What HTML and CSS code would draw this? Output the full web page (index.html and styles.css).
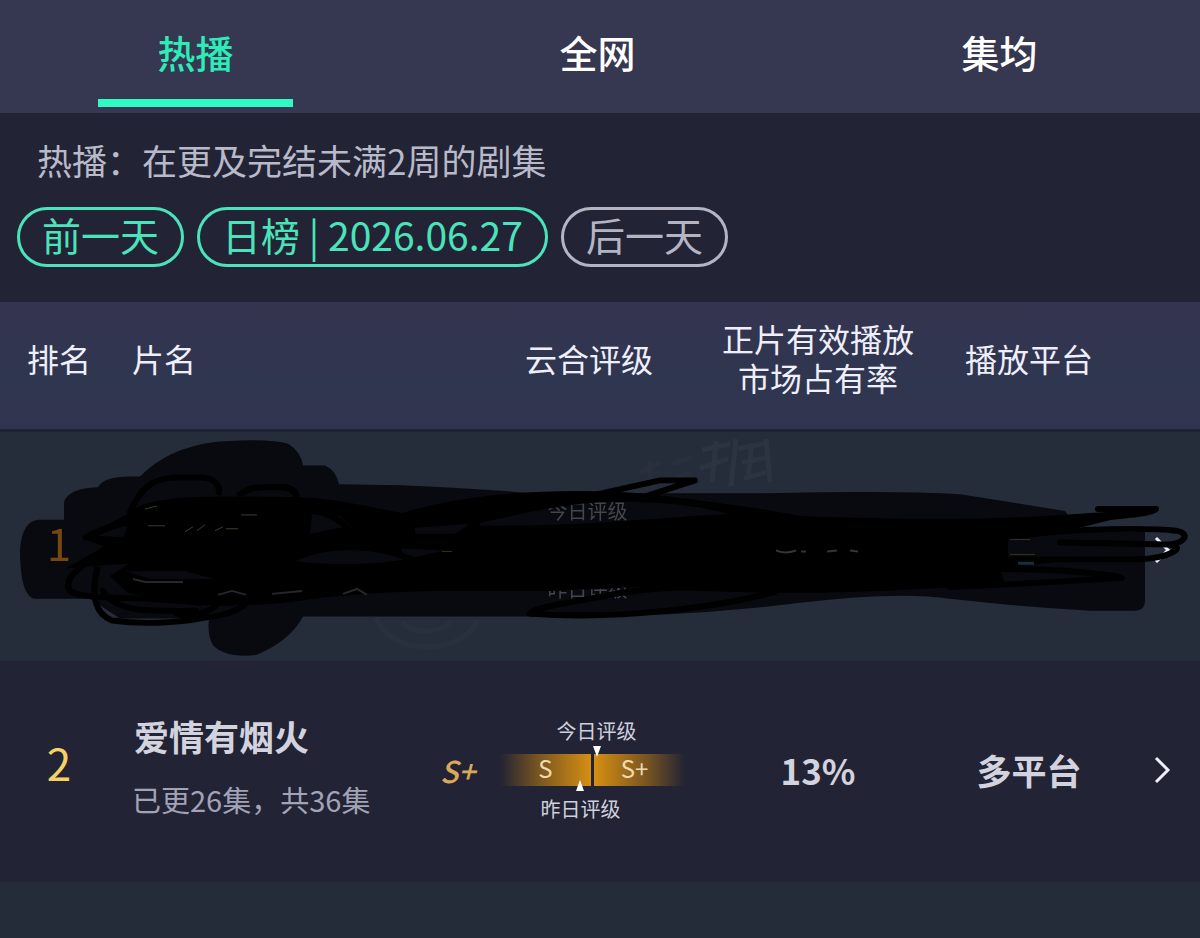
FILE: index.html
```html
<!DOCTYPE html>
<html lang="zh-CN">
<head>
  <meta charset="UTF-8">
  <meta name="viewport" content="width=device-width, initial-scale=1.0">
  <title>热播榜</title>
  <link rel="stylesheet" href="styles.css">
</head>
<body>
  <nav class="tabs">
    <button type="button" class="tab active">热播</button>
    <button type="button" class="tab">全网</button>
    <button type="button" class="tab">集均</button>
  </nav>

  <section class="filters">
    <p class="note">热播：在更及完结未满2周的剧集</p>
    <div class="days">
      <button type="button" class="pill">前一天</button>
      <button type="button" class="pill">日榜 | 2026.06.27</button>
      <button type="button" class="pill muted">后一天</button>
    </div>
  </section>

  <table class="ranking">
    <colgroup>
      <col class="col-rank">
      <col>
      <col class="col-grade">
      <col class="col-share">
      <col class="col-platform">
      <col class="col-more">
    </colgroup>
    <thead>
      <tr>
        <th>排名</th>
        <th class="name">片名</th>
        <th class="grade-head">云合评级</th>
        <th>正片有效播放<br>市场占有率</th>
        <th>播放平台</th>
        <th></th>
      </tr>
    </thead>
    <tbody>
      <!-- first place, scribbled out -->
      <tr class="row hidden-row">
        <td class="rank">1
          <svg class="shade" viewBox="0 430 1200 231" preserveAspectRatio="none" aria-hidden="true">
            <g fill="none" stroke="#3b4452" stroke-width="5" opacity="0.35">
              <path d="M702 447l28-6M716 438l-4 42M700 466l28-10M736 436l-5 48M738 446l30-6M766 436l4 44M742 460l24-5M744 476l22-6M752 440l-4 36"/>
              <path d="M640 470l20-10M650 458v22M672 462l20-8M676 476l16-6" opacity="0.5"/>
              <path d="M376 617C385 640 410 649 438 646C460 642 474 632 477 618M402 622C415 634 440 634 452 620" stroke-width="6" opacity="0.5"/>
            </g>
            <path fill="#030306" fill-opacity="0.82" d="M20 548Q22 520 38 518H64V500Q68 486 98 485Q103 474 130 474H140Q168 445 215 439Q270 435 288 441Q301 449 303 463H325Q336 468 339 482L400 483Q470 486 535 491H765Q900 488 960 492L1065 509L1080 530H1145V600Q1145 610 1135 610H1090Q1020 606 950 598Q900 590 800 602C720 612 650 616 560 616H303Q290 641 256 655Q225 658 213 645Q207 635 209 618H120L90 598H35Q20 596 20 548Z"/>
          </svg>
        </td>
        <td class="name"></td>
        <td class="grade-cell">
          <div class="grade">
            <span class="grade-now"></span>
            <div class="meter">
              <span>今日评级</span>
              <div class="bar"></div>
              <span>昨日评级</span>
            </div>
          </div>
        </td>
        <td></td>
        <td></td>
        <td class="more">
          <a href="#" aria-label="详情"><svg class="chevron" viewBox="0 0 18 28"><path d="M3 2l12 12L3 26"/></svg></a>
          <svg class="ink" viewBox="0 430 1200 231" preserveAspectRatio="none" aria-hidden="true">
            <path fill="#000" fill-rule="evenodd" d="M82 536L128 512C150 492 200 494 300 495C340 497 370 505 402 511C470 490 560 485 640 491C700 498 760 506 800 514C900 518 1000 518 1060 513L1154 507L1080 526L1008 538V560L1060 560L1000 567L1005 583C900 590 840 592 780 592L700 590L640 586L550 590H500C420 589 350 592 300 600C250 606 220 606 180 603L128 592L110 575L130 562L66 567L104 545ZM480 521C520 512 560 503 600 500C650 498 700 503 728 512C650 516 600 524 480 524ZM295 560C330 544 370 546 405 558C380 563 340 565 295 560ZM98 534L128 521L124 536ZM125 570H185L215 578L150 578ZM312 512L340 514L350 524L310 532ZM402 547L445 549L415 556L402 554ZM415 526L470 522L455 532L415 532Z"/>
            <g class="strokes">
              <path d="M130 510C140 488 150 476 175 475H202C215 476 219 483 219 490M240 492Q250 485 262 485H285Q298 487 297 500"/>
              <path d="M86 536C120 515 160 520 220 508M100 552C75 568 63 580 70 590C85 600 130 594 200 602M97 568C92 590 92 612 112 620C140 624 175 623 205 617C225 615 235 611 245 604M103 590C115 612 150 611 196 610M173 610C185 620 200 615 215 606"/>
              <path d="M298 508C320 505 345 520 352 532M380 545L420 562M580 496L660 478H695L640 496M530 613C535 606 570 602 600 596C630 589 660 587 690 586M530 613C620 620 720 606 775 591"/>
              <path d="M1098 507H1156C1150 514 1100 514 1040 522M1020 534C1080 526 1150 526 1176 529C1192 532 1184 542 1168 543L1060 541M1168 543C1190 545 1168 557 1138 558H1010M980 568C1060 567 1110 573 1122 577C1060 580 1010 584 950 586"/>
            </g>
            <g fill="none" stroke-width="1">
              <path stroke="#34402e" d="M145 507l12-3M148 524h17M185 530l8-5M197 529l8-6M215 529l8-4M226 527h12M241 513h16"/>
              <path stroke="#26262c" stroke-width="2" d="M133 578l12 3h38M218 594l14-4 14 4M272 593l30-3M343 593l14-5 10 6"/>
              <path stroke="#34343a" stroke-width="2" d="M776 549q8 4 20 0M801 550h5M827 550l10-1M850 549l8 1"/>
              <path stroke="#39321c" d="M442 550h10M1010 553h25M1010 538h20"/>
              <path stroke="#123036" stroke-width="3" d="M1018 562h16"/>
            </g>
          </svg>
        </td>
      </tr>
      <tr class="row">
        <td class="rank">2</td>
        <td class="name">
          <div class="title">爱情有烟火</div>
          <div class="episodes">已更26集，共36集</div>
        </td>
        <td class="grade-cell">
          <div class="grade">
            <span class="grade-now">S+</span>
            <div class="meter">
              <span class="today">今日评级</span>
              <div class="bar">
                <span class="bar-low">S</span>
                <span class="bar-high">S+</span>
                <i class="mark mark-today"></i>
                <i class="mark mark-yesterday"></i>
              </div>
              <span class="yesterday">昨日评级</span>
            </div>
          </div>
        </td>
        <td class="strong">13%</td>
        <td class="strong">多平台</td>
        <td class="more">
          <a href="#" aria-label="详情"><svg class="chevron" viewBox="0 0 18 28"><path d="M3 2l12 12L3 26"/></svg></a>
        </td>
      </tr>
      <tr class="row next-row">
        <td colspan="6"></td>
      </tr>
    </tbody>
  </table>
</body>
</html>
```
FILE: styles.css
```css
* {
  box-sizing: border-box;
}
body {
  margin: 0;
  background-color: #222334;
  color: #eeeffa;
  font-family: "Noto Sans CJK SC", sans-serif;
}
button {
  font-family: inherit;
  background: none;
  border: none;
  cursor: pointer;
}

/* tabs */
.tabs {
  display: flex;
  justify-content: space-between;
  padding: 24px 103px 6px 98px;
  background-color: #363750;
}
.tab {
  display: flex;
  flex-direction: column;
  align-items: center;
  gap: 19px;
  padding: 0;
  color: #fff;
  font-size: 38px;
  font-weight: 500;
  line-height: 56px;
}
.tab::after {
  content: "";
  width: 195px;
  height: 8px;
}
.tab.active {
  color: #2eebba;
}
.tab.active::after {
  background-color: #2ffac6;
}

/* date filter */
.filters {
  padding: 21px 17px 35px;
}
.note {
  margin: 0 0 21px;
  padding-left: 20px;
  color: #b9bac9;
  font-size: 35px;
  line-height: 52px;
}
.days {
  display: flex;
  gap: 13px;
}
.pill {
  height: 60px;
  padding: 0 22px 6px;
  border: 3px solid #4be3bb;
  border-radius: 30px;
  color: #4be3bb;
  font-size: 39px;
  line-height: 48px;
}
.pill.muted {
  border-color: #b4b5c4;
  color: #b4b5c4;
}

/* ranking */
.ranking {
  width: 100%;
  table-layout: fixed;
  border-collapse: collapse;
}
.col-rank {
  width: 118px;
}
.col-grade {
  width: 284px;
}
.col-share {
  width: 208px;
}
.col-platform {
  width: 214px;
}
.col-more {
  width: 64px;
}
th, td {
  padding: 0;
  text-align: center;
}
thead tr {
  height: 128px;
  background: linear-gradient(#35344f, #2f3650 60%, #31344f);
}
th {
  padding-bottom: 14px;
  font-size: 32px;
  font-weight: 400;
  line-height: 39px;
}
.name {
  padding-left: 14px;
  text-align: left;
}
.grade-head {
  padding-left: 34px;
}
.row {
  height: 221px;
}
.row td {
  padding-bottom: 4px;
}
.row .name {
  padding-bottom: 10px;
}
.row .rank {
  padding-bottom: 20px;
  color: #f6d264;
  font-size: 44px;
}
.title {
  margin-bottom: 16px;
  padding-left: 2px;
  color: #d2d3de;
  font-size: 35px;
  font-weight: 700;
  line-height: 48px;
}
.episodes {
  color: #a2a3b7;
  font-size: 29px;
  line-height: 46px;
}
.strong {
  color: #d2d3de;
  font-size: 35px;
  font-weight: 700;
}
.grade {
  display: grid;
  grid-template-columns: 60px 185px;
  align-items: center;
  padding-left: 10px;
}
.grade-now {
  color: #dba75a;
  font-size: 30px;
  font-style: italic;
  font-weight: 500;
  text-align: left;
}
.meter {
  display: grid;
  gap: 9px;
  color: #cfd0dd;
  font-size: 20px;
  line-height: 28px;
}
.today {
  padding-left: 8px;
}
.yesterday {
  padding-right: 24px;
}
.bar {
  position: relative;
  display: grid;
  grid-template-columns: 1fr 1fr;
  gap: 3px;
  height: 32px;
  color: #f0d9b0;
  font-size: 24px;
}
.bar-low {
  background: linear-gradient(to right, #222334, #745322 40%, #d68f12);
}
.bar-high {
  padding-right: 10px;
  background: linear-gradient(to left, #222334, #745322 40%, #d68f12);
}
.mark {
  position: absolute;
  border: 4px solid transparent;
}
.mark-today {
  top: -8px;
  left: 93px;
  border-top: 11px solid #fff;
  border-bottom: none;
}
.mark-yesterday {
  bottom: -5px;
  left: 76px;
  border-top: none;
  border-bottom: 11px solid #fff;
}
.row .more {
  padding-right: 12px;
}
.chevron {
  display: block;
  width: 18px;
  height: 28px;
  margin: 0 auto;
  fill: none;
  stroke: #eeeffa;
  stroke-width: 3;
}

/* scribbled row: shade lies under the text, ink over it */
.hidden-row {
  position: relative;
  z-index: 0;
  height: 231px;
  background-color: #252c3a;
  border-top: 3px solid #1d2436;
}
.hidden-row td {
  padding-top: 11px;
}
.hidden-row .rank {
  color: #75480f;
}
.hidden-row .meter {
  padding-right: 10px;
  color: #45464b;
}
.shade, .ink {
  position: absolute;
  top: 0;
  left: 0;
  width: 100%;
  height: 100%;
}
.shade {
  z-index: -1;
}
.ink {
  pointer-events: none;
}
.strokes {
  fill: none;
  stroke: #000;
  stroke-width: 6;
  stroke-linecap: round;
  stroke-linejoin: round;
}
.next-row {
  height: 56px;
  background-color: #252c39;
}
```
